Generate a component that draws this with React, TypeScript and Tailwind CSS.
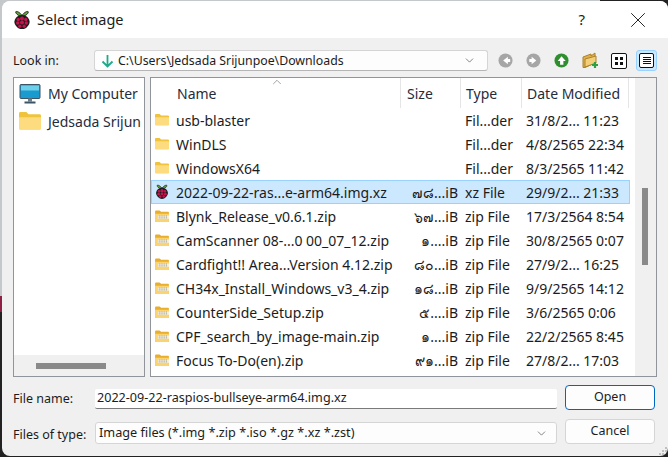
import { ChevronDown, ChevronUp, X } from 'lucide-react';

const FONT = "font-['Noto_Sans','Open_Sans','DejaVu_Sans',sans-serif]";

type Row = {
    name: string;
    size: string;
    type: string;
    date: string;
    icon: 'folder' | 'zip' | 'pi';
    selected?: boolean;
};

const rows: Row[] = [
    { name: 'usb-blaster', size: '', type: 'Fil...der', date: '31/8/2... 11:23', icon: 'folder' },
    { name: 'WinDLS', size: '', type: 'Fil...der', date: '4/8/2565 22:34', icon: 'folder' },
    { name: 'WindowsX64', size: '', type: 'Fil...der', date: '8/3/2565 11:42', icon: 'folder' },
    { name: '2022-09-22-ras...e-arm64.img.xz', size: '๗๘...iB', type: 'xz File', date: '29/9/2... 21:33', icon: 'pi', selected: true },
    { name: 'Blynk_Release_v0.6.1.zip', size: '๖๗...iB', type: 'zip File', date: '17/3/2564 8:54', icon: 'zip' },
    { name: 'CamScanner 08-...0 00_07_12.zip', size: '๑....iB', type: 'zip File', date: '30/8/2565 0:07', icon: 'zip' },
    { name: 'Cardfight!! Area...Version 4.12.zip', size: '๘๐...iB', type: 'zip File', date: '27/9/2... 16:25', icon: 'zip' },
    { name: 'CH34x_Install_Windows_v3_4.zip', size: '๑๘...iB', type: 'zip File', date: '9/9/2565 14:12', icon: 'zip' },
    { name: 'CounterSide_Setup.zip', size: '๕....iB', type: 'zip File', date: '3/6/2565 0:06', icon: 'zip' },
    { name: 'CPF_search_by_image-main.zip', size: '๑....iB', type: 'zip File', date: '22/2/2565 8:45', icon: 'zip' },
    { name: 'Focus To-Do(en).zip', size: '๙๑...iB', type: 'zip File', date: '27/8/2... 17:03', icon: 'zip' },
];

const Raspberry = ({ size = 16 }: { size?: number }) => (
    <svg width={size} height={size * 1.1} viewBox="0 0 20 22" className="shrink-0">
        <path d="M10 6 C7 2 4 1 3 2 C3 4 5 6 9 7Z M10 6 C13 2 16 1 17 2 C17 4 15 6 11 7Z" fill="#5fa83a" stroke="#1d1d1d" strokeWidth="1" />
        <path d="M10 5.5 C15 5.5 18 9 18.5 13 C18.5 17 14 21.5 10 21.5 C6 21.5 1.5 17 1.5 13 C2 9 5 5.5 10 5.5Z" fill="#1d1d1d" />
        <g fill="#c7124d">
            <circle cx="10" cy="9.5" r="2.2" />
            <circle cx="5.8" cy="10.5" r="1.9" />
            <circle cx="14.2" cy="10.5" r="1.9" />
            <circle cx="10" cy="14" r="2.2" />
            <circle cx="5.2" cy="14.5" r="1.9" />
            <circle cx="14.8" cy="14.5" r="1.9" />
            <circle cx="7.6" cy="18" r="1.8" />
            <circle cx="12.4" cy="18" r="1.8" />
        </g>
    </svg>
);

const Folder = ({ size = 14 }: { size?: number }) => (
    <svg width={size} height={size * 0.8} viewBox="0 0 15 12" className="shrink-0">
        <path d="M0 1 Q0 0 1 0 H5 L6.5 1.5 H14 Q15 1.5 15 2.5 V11 Q15 12 14 12 H1 Q0 12 0 11Z" fill="#f0c33c" />
        <path d="M0 3.5 H15 V11 Q15 12 14 12 H1 Q0 12 0 11Z" fill="#fcdc7e" />
    </svg>
);

const ZipFolder = () => (
    <svg width="14" height="12" viewBox="0 0 15 13" className="shrink-0">
        <path d="M0 1.5 Q0 0.5 1 0.5 H5 L6.5 2 H14 Q15 2 15 3 V12 Q15 13 14 13 H1 Q0 13 0 12Z" fill="#e8ae2c" />
        <path d="M0 4 H15 V12 Q15 13 14 13 H1 Q0 13 0 12Z" fill="#fbd36f" />
        <rect x="3" y="6" width="12" height="3.5" fill="#f4f1e6" />
        <path d="M4 6.5 H14 M4 8.5 H14" stroke="#8d8d7c" strokeWidth="1" strokeDasharray="1 1" />
    </svg>
);

const NavCircle = ({ color, dir }: { color: string; dir: 'left' | 'right' | 'up' }) => {
    const d = {
        left: 'M10.5 4 L5.5 8 L10.5 12 V9.5 H13 V6.5 H10.5Z',
        right: 'M6 4 L11 8 L6 12 V9.5 H3.5 V6.5 H6Z',
        up: 'M8 3.5 L12.5 8.5 H10 V12.5 H6.5 V8.5 H4Z',
    }[dir];
    return (
        <svg width="15" height="15" viewBox="0 0 16 16" className="shrink-0">
            <circle cx="8" cy="8" r="7.5" fill={color} />
            <path d={d} fill="#fff" />
        </svg>
    );
};

const Label = ({ children, className = '' }: { children: string; className?: string }) => (
    <span className={`text-[12.5px] leading-none text-[#1c1c1c] ${className}`}>{children}</span>
);

const HeaderCell = ({ children, className = '' }: { children: string; className?: string }) => (
    <div className={`flex items-center h-full border-r border-[#e5e5e5] text-[14px] text-[#1f2d3d] ${className}`}>
        {children}
    </div>
);

const FileRow = ({ row }: { row: Row }) => (
    <div
        className={`grid grid-cols-[249px_60px_61px_107px] items-center h-6 border text-[14px] leading-5 text-[#1c1c1c] whitespace-nowrap ${
            row.selected ? 'bg-[#cce8ff] border-[#99d1ff]' : 'border-transparent'
        }`}
    >
        <div className="flex items-center pl-[3px] gap-[7px] overflow-hidden">
            {row.icon === 'folder' && <Folder />}
            {row.icon === 'zip' && <ZipFolder />}
            {row.icon === 'pi' && <Raspberry size={14} />}
            <span className="mt-[2px]">{row.name}</span>
        </div>
        <div className="mt-[2px] text-right pr-[3px]">{row.size}</div>
        <div className="mt-[2px] pl-[4px]">{row.type}</div>
        <div className="mt-[2px] pl-[4px]">{row.date}</div>
    </div>
);

export default function App() {
    return (
        <div
            className={`h-[457px] w-[668px] overflow-hidden pt-px bg-[linear-gradient(90deg,transparent_0,transparent_600px,#222222_600px),linear-gradient(180deg,#c4c8cb_0,#c4c8cb_296px,#8e1f45_296px,#8e1f45_312px,#222222_312px)] ${FONT}`}
        >
            <div className="relative ml-[2px] flex h-[455px] flex-col overflow-hidden rounded-lg bg-[#f0f0f0]">
                {/* title bar */}
                <div className="flex h-[37px] shrink-0 items-center bg-white pl-[11px]">
                    <Raspberry size={18} />
                    <span className="ml-[6px] text-[14.5px] text-[#1c1c1c]">Select image</span>
                    <span className="ml-auto mr-[40px] text-[15px] text-[#1c1c1c]">?</span>
                    <X size={26} strokeWidth={0.9} className="mr-[17px] text-[#222]" />
                </div>

                {/* look in row */}
                <div className="mt-[12px] flex h-[21px] shrink-0 items-center pl-[11px]">
                    <Label className="mt-[2px] w-[81px]">Look in:</Label>
                    <div className="flex h-[21px] w-[394px] items-center rounded-[3px] border border-[#d5d5d5] border-b-[#b5b5b5] bg-[#fdfdfd] pl-[6px] pr-[11px]">
                        <svg width="13" height="14" viewBox="0 0 13 14" className="shrink-0">
                            <path d="M6.5 1 V12 M1.5 7.5 L6.5 12.5 L11.5 7.5" fill="none" stroke="#1fa98c" strokeWidth="1.8" />
                        </svg>
                        <span className="ml-[4px] mt-[2px] text-[12.3px] text-[#1c1c1c]">C:\Users\Jedsada Srijunpoe\Downloads</span>
                        <ChevronDown size={13} strokeWidth={1.2} className="ml-auto text-[#444]" />
                    </div>
                    <div className="ml-[10px] flex items-center gap-[13px]">
                        <NavCircle color="#a6a6a6" dir="left" />
                        <NavCircle color="#a6a6a6" dir="right" />
                        <NavCircle color="#2f8f2f" dir="up" />
                        <svg width="17" height="17" viewBox="0 0 17 17" className="shrink-0">
                            <path d="M1 5 L9 2 V4 L13 1 V11 L3 15.5 H1Z" fill="#e2b04a" stroke="#a9822c" strokeWidth="1" />
                            <path d="M3 7 L14 4 V11 L3 15Z" fill="#f3cf7a" stroke="#a9822c" strokeWidth="1" />
                            <path d="M13 10 V16 M10 13 H16" stroke="#2ea043" strokeWidth="2.2" />
                        </svg>
                    </div>
                    <div className="ml-[12px] flex items-center gap-[12px]">
                        <div className="flex h-[16px] w-[16px] items-center justify-center rounded-[2px] border border-[#111] bg-white">
                            <div className="grid grid-cols-2 gap-[2px]">
                                <div className="h-[3px] w-[3px] bg-[#111]" />
                                <div className="h-[3px] w-[3px] bg-[#111]" />
                                <div className="h-[3px] w-[3px] bg-[#111]" />
                                <div className="h-[3px] w-[3px] bg-[#111]" />
                            </div>
                        </div>
                        <div className="-ml-[3px] flex h-[21px] w-[21px] items-center justify-center rounded-[3px] border border-[#99d1ff] bg-[#cce8ff]">
                            <div className="flex h-[15px] w-[15px] flex-col items-center justify-center gap-px rounded-[2px] border border-[#111] bg-white">
                                <div className="h-px w-[8px] bg-[#111]" />
                                <div className="h-px w-[8px] bg-[#111]" />
                                <div className="h-px w-[8px] bg-[#111]" />
                                <div className="h-px w-[8px] bg-[#111]" />
                            </div>
                        </div>
                    </div>
                </div>

                {/* panels */}
                <div className="mt-[6px] flex h-[300px] shrink-0 gap-[5px] pl-[11px]">
                    <div className="flex w-[132px] flex-col overflow-hidden border border-[#8f959b] bg-white">
                        <div className="flex-1 whitespace-nowrap pt-[2px] text-[14px] text-[#1f2d3d]">
                            <div className="flex h-[27px] items-center pl-[5px]">
                                <svg width="22" height="20" viewBox="0 0 22 20" className="shrink-0">
                                    <rect x="1" y="0.5" width="20" height="14" rx="1" fill="#1a9bd0" stroke="#3b5566" />
                                    <rect x="2" y="1.5" width="18" height="5" fill="#6cd0ea" />
                                    <rect x="9" y="14.5" width="4" height="3" fill="#6f7f88" />
                                    <rect x="5.5" y="17.5" width="11" height="2" fill="#3b5566" />
                                </svg>
                                <span className="ml-[7px]">My Computer</span>
                            </div>
                            <div className="flex h-[28px] items-center pl-[5px]">
                                <Folder size={22} />
                                <span className="ml-[7px]">Jedsada Srijun</span>
                            </div>
                        </div>
                        <div className="flex h-[21px] shrink-0 items-center bg-[#f0f0f0] pl-[22px]">
                            <div className="h-[6px] w-[70px] bg-[#8a8a8a]" />
                        </div>
                    </div>

                    <div className="relative flex w-[507px] overflow-hidden border border-[#8f959b] bg-white">
                        <div className="w-[479px] shrink-0">
                            <div className="grid h-[30px] grid-cols-[250px_60px_61px_107px] items-center">
                                <HeaderCell className="pl-[26px]">Name</HeaderCell>
                                <HeaderCell className="pl-[6px]">Size</HeaderCell>
                                <HeaderCell className="pl-[5px]">Type</HeaderCell>
                                <HeaderCell className="pl-[5px]">Date Modified</HeaderCell>
                            </div>
                            <ChevronUp size={14} strokeWidth={1} className="absolute left-[119px] top-[-3px] text-[#666]" />
                            {rows.map((row) => (
                                <FileRow key={row.name} row={row} />
                            ))}
                        </div>
                        <div className="ml-auto w-[21px] shrink-0 bg-[#f0f0f0] pl-[7px] pt-[110px]">
                            <div className="h-[77px] w-[6px] bg-[#8a8a8a]" />
                        </div>
                    </div>
                </div>

                {/* bottom form */}
                <div className="mt-[8px] flex shrink-0 pl-[11px]">
                    <div className="w-[82px]">
                        <div className="flex h-[28px] items-center"><Label>File name:</Label></div>
                        <div className="mt-[6px] flex h-[32px] items-center"><Label>Files of type:</Label></div>
                    </div>
                    <div className="w-[462px] pt-[4px]">
                        <div className="flex h-[20px] items-center rounded-[2px] border-b border-b-[#7a7a7a] bg-white pl-[2px] text-[12.6px] text-[#1c1c1c]">
                            2022-09-22-raspios-bullseye-arm64.img.xz
                        </div>
                        <div className="mt-[13px] flex h-[22px] items-center rounded-[3px] border border-[#d5d5d5] bg-[#fdfdfd] pl-[3px] pr-[8px] text-[12.7px] text-[#1c1c1c]">
                            Image files (*.img *.zip *.iso *.gz *.xz *.zst)
                            <ChevronDown size={13} strokeWidth={1.2} className="ml-auto text-[#444]" />
                        </div>
                    </div>
                    <div className="ml-[8px] w-[90px]">
                        <button className="flex h-[25px] w-full items-center justify-center rounded-[4px] border border-[#0067c0] bg-[#fdfdfd] text-[12.5px] text-[#1c1c1c]">
                            Open
                        </button>
                        <button className="mt-[9px] flex h-[25px] w-full items-center justify-center rounded-[4px] border border-[#d5d5d5] bg-[#fdfdfd] text-[12.5px] text-[#1c1c1c]">
                            Cancel
                        </button>
                    </div>
                </div>

                {/* size grip */}
                <div className="absolute bottom-[1px] right-[1px] grid grid-cols-3 gap-px">
                    <div className="h-[2px] w-[2px]" />
                    <div className="h-[2px] w-[2px]" />
                    <div className="h-[2px] w-[2px] bg-[#c0c0c0]" />
                    <div className="h-[2px] w-[2px]" />
                    <div className="h-[2px] w-[2px] bg-[#c0c0c0]" />
                    <div className="h-[2px] w-[2px] bg-[#c0c0c0]" />
                    <div className="h-[2px] w-[2px] bg-[#c0c0c0]" />
                    <div className="h-[2px] w-[2px] bg-[#c0c0c0]" />
                    <div className="h-[2px] w-[2px] bg-[#c0c0c0]" />
                </div>
            </div>
        </div>
    );
}
